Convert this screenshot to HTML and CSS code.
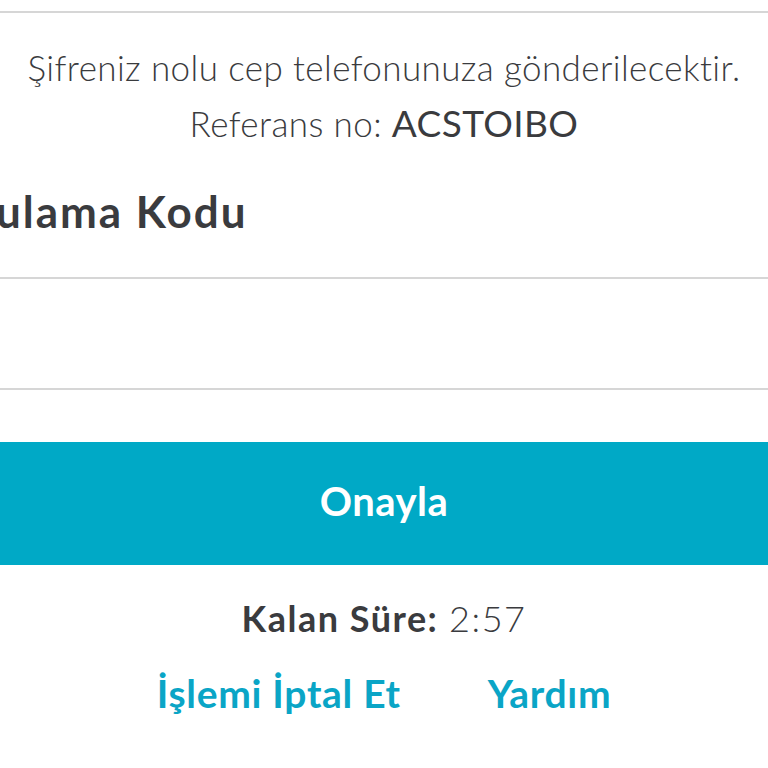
FILE: index.html
```html
<!DOCTYPE html>
<html lang="tr">
<head>
<meta charset="utf-8">
<link rel="stylesheet" href="styles.css">
</head>
<body>
<div class="page">
  <div class="rule"></div>
  <div class="info">
    <p class="line">Şifreniz nolu cep telefonunuza gönderilecektir.</p>
    <p class="line">Referans no: <span class="ref">ACSTOIBO</span></p>
  </div>
  <label class="label">Doğrulama Kodu</label>
  <div class="field"></div>
  <button class="btn">Onayla</button>
  <p class="timer"><b>Kalan Süre:</b> <span class="time">2:57</span></p>
  <div class="links">
    <a class="link">İşlemi İptal Et</a>
    <a class="link">Yardım</a>
  </div>
</div>
</body>
</html>
```
FILE: styles.css
```css
html, body {
  margin: 0;
  padding: 0;
  background: #fff;
  overflow: hidden;
}
body {
  font-family: Lato, "Noto Sans", sans-serif;
  color: #3a3b3e;
}
.page {
  padding-top: 11px;
  display: flex;
  flex-direction: column;
}
.rule {
  border-top: 2px solid #d6d6d6;
}
.info {
  margin-top: 26px;
  text-align: center;
}
.line {
  margin: 0;
  font-size: 35px;
  line-height: 56px;
  font-weight: 300;
  letter-spacing: 0.4px;
}
.ref {
  font-weight: 400;
  font-size: 37px;
}
.label {
  margin-top: 36px;
  margin-left: -110px;
  font-size: 44px;
  line-height: 48px;
  font-weight: 700;
  letter-spacing: 2px;
  white-space: nowrap;
}
.field {
  margin-top: 42px;
  height: 109px;
  border-top: 2px solid #d6d6d6;
  border-bottom: 2px solid #d6d6d6;
}
.btn {
  margin-top: 52px;
  height: 123px;
  border: 0;
  background: #00a9c6;
  color: #fff;
  font-family: inherit;
  font-size: 40px;
  font-weight: 700;
  letter-spacing: 0.5px;
  padding: 0 0 6px;
}
.timer {
  margin: 29px 0 0;
  text-align: center;
  font-size: 36px;
  line-height: 48px;
  letter-spacing: 1.5px;
}
.timer b {
  font-weight: 700;
}
.time {
  font-weight: 300;
}
.links {
  margin-top: 27px;
  display: flex;
  justify-content: center;
  gap: 87px;
}
.link {
  color: #0aa5c6;
  font-size: 39px;
  line-height: 48px;
  font-weight: 700;
  letter-spacing: 0.7px;
}
```
